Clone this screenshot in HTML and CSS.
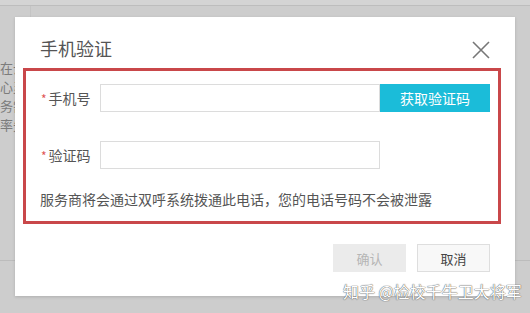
FILE: index.html
```html
<!DOCTYPE html>
<html lang="zh-CN">
<head>
    <meta charset="UTF-8">
    <title>手机验证</title>
    <link rel="stylesheet" href="styles.css">
</head>
<body>

<div class="pagina">
    <div class="topo"></div>
    <div class="lateral">
        <p>在云</p>
        <p>心灵</p>
        <p>务需</p>
        <p>率先</p>
    </div>
    <div class="rodape"></div>
</div>

<div class="dialogo">
    <h2 class="titulo">手机验证</h2>
    <span class="fechar">
        <svg width="18" height="18" viewBox="0 0 18 18"><path d="M1 1 L17 17 M17 1 L1 17" stroke="#777" stroke-width="1.6" fill="none"/></svg>
    </span>

    <div class="form">
        <div class="linha">
            <label class="rotulo"><i>*</i>手机号</label>
            <input class="campo" type="text">
            <button class="btn-codigo">获取验证码</button>
        </div>
        <div class="linha">
            <label class="rotulo"><i>*</i>验证码</label>
            <input class="campo" type="text">
        </div>
        <p class="aviso">服务商将会通过双呼系统拨通此电话，您的电话号码不会被泄露</p>
    </div>

    <div class="acoes">
        <button class="btn btn-ok" disabled>确认</button>
        <button class="btn">取消</button>
    </div>

    <!-- moldura vermelha de destaque -->
    <div class="destaque"></div>
</div>

<div class="marca">知乎 @检校千牛卫大将军</div>

</body>
</html>
```

FILE: styles.css
```css
body {
    margin: 0;
    width: 530px;
    height: 313px;
    overflow: hidden;
    background-color: #cdcdcd;
    font-family: "Noto Sans CJK SC", "Noto Sans", sans-serif;
    position: relative;
}
.pagina {
    height: 313px;
}
.topo {
    height: 5px;
    border-bottom: 1px solid #bdbdbd;
    background-color: #d4d4d4;
}
.lateral {
    padding-top: 52px;
    width: 30px;
    border-right: 1px solid #c4c4c4;
    height: 202px;
}
.lateral p {
    margin: 0;
    font-size: 13px;
    line-height: 19px;
    color: #7c7c7c;
}
.rodape {
    border-top: 1px solid #bcbcbc;
}
.dialogo {
    position: absolute;
    left: 15px;
    top: 17px;
    width: 500px;
    height: 279px;
    box-sizing: border-box;
    padding: 18px 25px 0 25px;
    background-color: #fff;
    box-shadow: 0 1px 3px rgba(0,0,0,0.15);
}
.titulo {
    margin: 0;
    font-size: 18px;
    font-weight: normal;
    line-height: 26px;
    color: #555;
}
.fechar {
    position: absolute;
    top: 23px;
    right: 25px;
    width: 18px;
    height: 18px;
}
.form {
    margin-top: 23px;
}
.linha {
    display: flex;
    align-items: center;
    height: 28px;
    margin-bottom: 29px;
}
.linha:last-of-type {
    margin-bottom: 0;
}
.rotulo {
    width: 60px;
    font-size: 14px;
    color: #555;
    padding-left: 1px;
    box-sizing: border-box;
}
.rotulo i {
    font-style: normal;
    color: #e05555;
    margin-right: 2px;
    font-size: 12px;
}
.campo {
    width: 280px;
    height: 28px;
    box-sizing: border-box;
    border: 1px solid #dcdcdc;
    margin: 0;
    padding: 0 6px;
    background: #fff;
}
.btn-codigo {
    width: 110px;
    height: 28px;
    border: none;
    margin: 0;
    background-color: #1bbcd9;
    color: #fff;
    font-family: inherit;
    font-size: 14px;
}
.aviso {
    margin: 20px 0 0 0;
    font-size: 14px;
    line-height: 20px;
    color: #555;
}
.acoes {
    display: flex;
    justify-content: flex-end;
    gap: 11px;
    margin-top: 35px;
}
.btn {
    width: 73px;
    height: 28px;
    border: 1px solid #dedede;
    background-color: #f8f8f8;
    color: #444;
    font-family: inherit;
    font-size: 13px;
}
.btn-ok {
    background-color: #ebebeb;
    border-color: #ebebeb;
    color: #b5b5b5;
}
.destaque {
    position: absolute;
    left: 8px;
    top: 51px;
    width: 478px;
    height: 156px;
    box-sizing: border-box;
    border: 3px solid #c9474a;
}
.marca {
    position: absolute;
    left: 343px;
    top: 280px;
    font-size: 16px;
    line-height: 22px;
    color: #fff;
    text-shadow: 0 0 1px #555, 0 0 1px #555;
}
```
